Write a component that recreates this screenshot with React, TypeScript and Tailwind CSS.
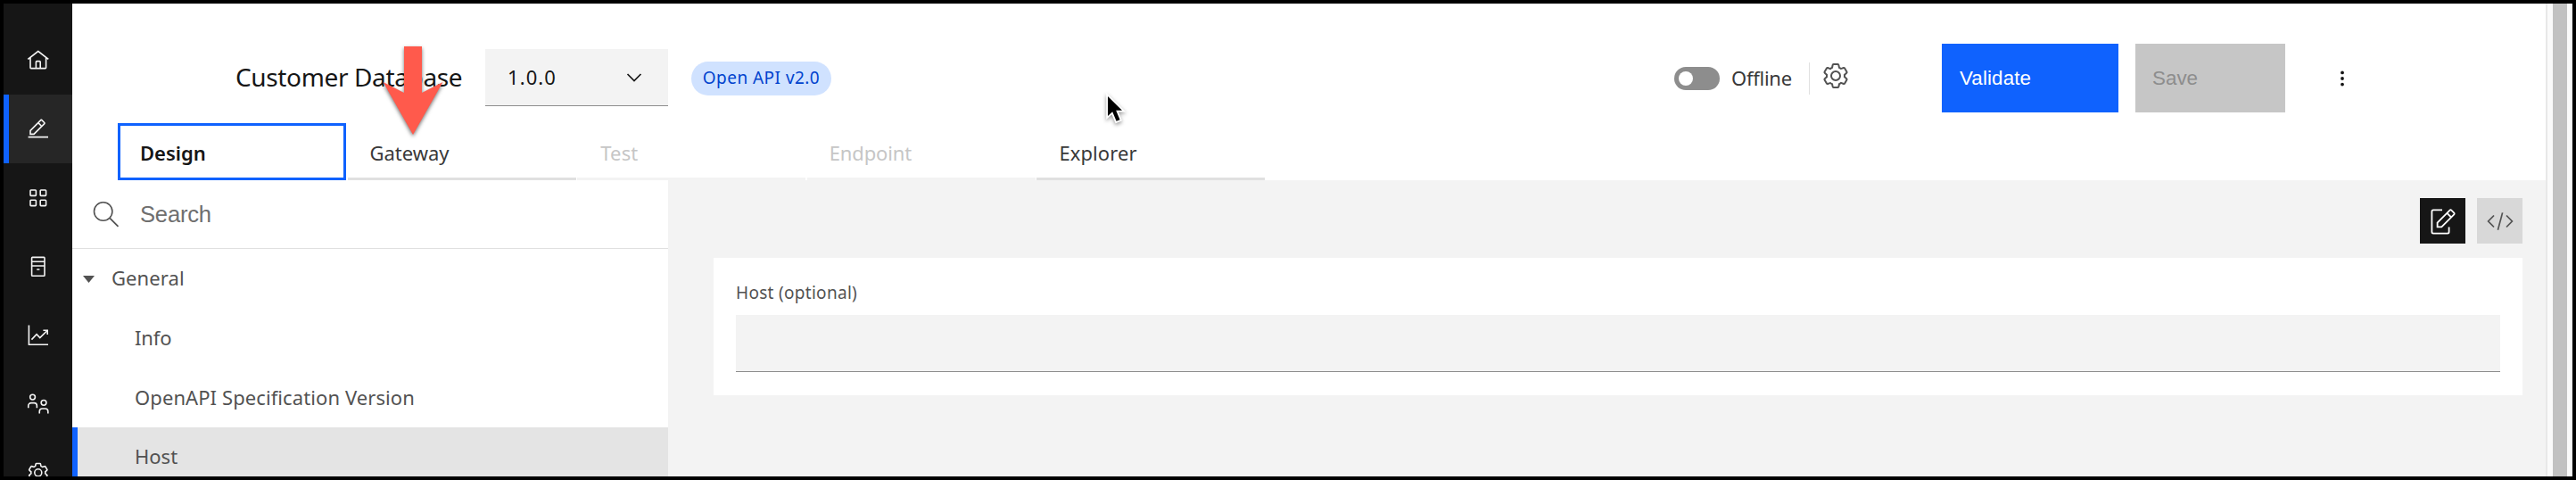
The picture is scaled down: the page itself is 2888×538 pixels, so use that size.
import React from "react";
import clsx from "clsx";

const SETTINGS_PATH =
  "M27,16.76c0-.25,0-.5,0-.76s0-.51,0-.77l1.92-1.68A2,2,0,0,0,29.3,11L26.94,7a2,2,0,0,0-1.73-1,2,2,0,0,0-.64.1l-2.43.82a11.35,11.35,0,0,0-1.31-.75l-.51-2.52a2,2,0,0,0-2-1.61H13.64a2,2,0,0,0-2,1.61l-.51,2.52a11.48,11.48,0,0,0-1.32.75L7.43,6.06A2,2,0,0,0,6.79,6,2,2,0,0,0,5.06,7L2.7,11a2,2,0,0,0,.41,2.51L5,15.24c0,.25,0,.5,0,.76s0,.51,0,.77L3.11,18.45A2,2,0,0,0,2.7,21L5.06,25a2,2,0,0,0,1.73,1,2,2,0,0,0,.64-.1l2.43-.82a11.35,11.35,0,0,0,1.31.75l.51,2.52a2,2,0,0,0,2,1.61h4.72a2,2,0,0,0,2-1.61l.51-2.52a11.48,11.48,0,0,0,1.32-.75l2.42.82a2,2,0,0,0,.64.1,2,2,0,0,0,1.73-1L29.3,21a2,2,0,0,0-.41-2.51ZM25.21,24l-3.43-1.16a8.86,8.86,0,0,1-2.71,1.57L18.36,28H13.64l-.71-3.55a9.36,9.36,0,0,1-2.7-1.57L6.79,24,4.43,20l2.72-2.4a8.9,8.9,0,0,1,0-3.13L4.43,12,6.79,8l3.43,1.16a8.86,8.86,0,0,1,2.71-1.57L13.64,4h4.72l.71,3.55a9.36,9.36,0,0,1,2.7,1.57L25.21,8,27.57,12l-2.72,2.4a8.9,8.9,0,0,1,0,3.13L27.57,20ZM16,22a6,6,0,1,1,6-6A5.94,5.94,0,0,1,16,22Zm0-10a3.91,3.91,0,0,0-4,4,3.91,3.91,0,0,0,4,4,3.91,3.91,0,0,0,4-4A3.91,3.91,0,0,0,16,12Z";

const HomeIcon = () => (
  <path
    fill="currentColor"
    d="M16.6123,2.2138a1.01,1.01,0,0,0-1.2427,0L1,13.4194l1.2427,1.5717L4,13.6208V26a2.0041,2.0041,0,0,0,2,2H26a2.0037,2.0037,0,0,0,2-2V13.63L29.7573,15,31,13.4282ZM18,26H14V18h4Zm2,0V18a2.0023,2.0023,0,0,0-2-2H14a2.002,2.002,0,0,0-2,2v8H6V12.0615l10-7.79,10,7.8005V26Z"
  />
);

const EditIcon = () => (
  <path
    fill="currentColor"
    d="M2 26H30V28H2z M25.4 9c.8-.8.8-2 0-2.8l-3.6-3.6c-.8-.8-2-.8-2.8 0l-15 15V24h6.4L25.4 9z M20.4 4L24 7.6l-3 3L17.4 7 20.4 4z M6 22v-3.6l10-10 3.6 3.6-10 10H6z"
  />
);

const AppsIcon = () => (
  <g fill="none" stroke="currentColor" strokeWidth="2">
    <rect x="5" y="5" width="8" height="8" rx="1" />
    <rect x="19" y="5" width="8" height="8" rx="1" />
    <rect x="5" y="19" width="8" height="8" rx="1" />
    <rect x="19" y="19" width="8" height="8" rx="1" />
  </g>
);

const CatalogIcon = () => (
  <g fill="none" stroke="currentColor" strokeWidth="2">
    <rect x="7" y="3" width="18" height="26" rx="1" />
    <path d="M7 9h18M7 15h18M14 20h4" />
  </g>
);

const ChartIcon = () => (
  <g fill="none" stroke="currentColor" strokeWidth="2">
    <path d="M3 2V29H30" />
    <path d="M6.8 22L13.8 14.5L18.5 19.5L29 9" />
    <path d="M23 9h6v6" />
  </g>
);

const MembersIcon = () => (
  <g fill="none" stroke="currentColor" strokeWidth="2">
    <circle cx="8.2" cy="6.4" r="3.6" />
    <path d="M2.2 21.5v-3a4 4 0 0 1 4-4h4a4 4 0 0 1 4 4v3" />
    <circle cx="23.8" cy="14.2" r="3.6" />
    <path d="M17.8 29.5v-3a4 4 0 0 1 4-4h4a4 4 0 0 1 4 4v3" />
  </g>
);

const SettingsIcon = () => <path fill="currentColor" d={SETTINGS_PATH} />;

const NAV = [
  { id: "home", Icon: HomeIcon },
  { id: "edit", Icon: EditIcon, active: true },
  { id: "apps", Icon: AppsIcon },
  { id: "catalog", Icon: CatalogIcon },
  { id: "analytics", Icon: ChartIcon },
  { id: "members", Icon: MembersIcon },
  { id: "settings", Icon: SettingsIcon },
];

function SideNav() {
  return (
    <nav className="flex w-[77px] shrink-0 flex-col overflow-hidden bg-[#161616] pt-[25px] text-[#f4f4f4]">
      {NAV.map(({ id, Icon, active }) => (
        <div
          key={id}
          className={clsx(
            "flex h-[77px] shrink-0 items-center justify-center",
            active && "border-l-6 border-[#0f62fe] bg-[#262626] pr-1.5",
          )}
        >
          <svg viewBox="0 0 32 32" className="size-[25.6px]">
            <Icon />
          </svg>
        </div>
      ))}
    </nav>
  );
}

const TABS = [
  { label: "Design", cls: "border-3 border-[#0f62fe] pl-[22px] pt-[3px] font-semibold text-[#161616]" },
  { label: "Gateway", cls: "border-b-3 border-[#e0e0e0] pl-[25px] pt-[6px] tracking-[-0.05px] text-[#393939]" },
  { label: "Test", cls: "border-b-3 border-[#f3f3f3] pl-[26px] pt-[6px] tracking-[0.17px] text-[#c6c6c6]" },
  { label: "Endpoint", cls: "border-b-3 border-[#f3f3f3] pl-[25px] pt-[6px] tracking-[-0.15px] text-[#c6c6c6]" },
  { label: "Explorer", cls: "border-b-3 border-[#e0e0e0] pl-[25px] pt-[6px] tracking-[0.1px] text-[#393939]" },
];

function Header() {
  return (
    <header className="h-[198px] shrink-0 bg-white pt-[45px]">
      <div className="flex h-[77px] items-center">
        <h1 className="mb-[3px] ml-[183px] w-[280px] shrink-0 whitespace-nowrap text-[28px] leading-[38px] tracking-[-0.36px] text-[#161616]">
          Customer Database
        </h1>
        <div className="mb-px flex h-16 w-[205px] shrink-0 items-center justify-between border-b border-[#8d8d8d] bg-[#f3f3f3] pl-[25px] pr-[28px] text-[22px] tracking-[1.1px] text-[#161616]">
          <span className="mb-px">1.0.0</span>
          <svg viewBox="0 0 20 12" className="h-3 w-5">
            <path d="M2.5 2L10 9.5L17.5 2" fill="none" stroke="currentColor" strokeWidth="1.7" />
          </svg>
        </div>
        <span className="ml-[26px] flex h-[38px] w-[157px] shrink-0 items-center justify-center whitespace-nowrap rounded-full bg-[#d0e2ff] text-[19px] tracking-[0.46px] text-[#0043ce]">
          Open API v2.0
        </span>
        <div className="ml-[945px] flex h-[26px] w-[51px] shrink-0 items-center rounded-full bg-[#8d8d8d] pl-[5px]">
          <div className="size-4 rounded-full bg-white" />
        </div>
        <span className="mb-px ml-[13px] w-[87px] shrink-0 whitespace-nowrap text-[22px] tracking-[-0.26px] text-[#393939]">
          Offline
        </span>
        <div className="h-9 w-px shrink-0 bg-[#e0e0e0]" />
        <svg viewBox="0 0 32 32" className="mb-[5px] ml-[13px] size-8 shrink-0 text-[#525252]">
          <SettingsIcon />
        </svg>
        <button className="ml-[103px] flex h-[77px] w-[198px] shrink-0 items-center bg-[#0f62fe] pl-5 font-['Liberation_Sans',sans-serif] text-[22.4px] tracking-[0.1px] text-white">
          Validate
        </button>
        <button className="ml-[19px] flex h-[77px] w-[168px] shrink-0 items-center bg-[#c6c6c6] pl-[19px] font-['Liberation_Sans',sans-serif] text-[22.4px] text-[#8d8d8d]">
          Save
        </button>
        <svg viewBox="0 0 32 32" className="ml-12 size-8 shrink-0 text-[#161616]">
          <circle cx="16" cy="9.4" r="1.9" fill="currentColor" />
          <circle cx="16" cy="16" r="1.9" fill="currentColor" />
          <circle cx="16" cy="22.6" r="1.9" fill="currentColor" />
        </svg>
      </div>
      <div className="ml-[51px] mt-3 flex gap-[1.6px] text-[22px]">
        {TABS.map(({ label, cls }) => (
          <div key={label} className={clsx("flex h-16 w-64 shrink-0 items-center", cls)}>
            {label}
          </div>
        ))}
      </div>
    </header>
  );
}

const TREE = [
  { label: "Info", cls: "border-transparent tracking-[-0.1px]" },
  { label: "OpenAPI Specification Version", cls: "border-transparent tracking-[0.09px]" },
  { label: "Host", cls: "border-[#0f62fe] bg-[#e4e4e4] pb-[2px]" },
];

function TreePanel() {
  return (
    <aside className="flex w-[668px] shrink-0 flex-col overflow-hidden bg-white text-[22px] text-[#525252]">
      <div className="flex h-[77px] shrink-0 items-center border-b border-[#e0e0e0] pl-[23px]">
        <svg viewBox="0 0 30 30" className="size-[30px] shrink-0">
          <circle cx="11.7" cy="12" r="10.2" fill="none" stroke="currentColor" strokeWidth="1.6" />
          <path d="M19 19.3L28.5 28.8" stroke="currentColor" strokeWidth="1.8" />
        </svg>
        <span className="ml-[23px] font-['Liberation_Sans',sans-serif] text-[25.6px] tracking-[-0.2px] text-[#6f6f6f]">
          Search
        </span>
      </div>
      <div className="flex h-[66.67px] shrink-0 items-center pb-[2px] pl-3">
        <svg viewBox="0 0 13 8" className="mt-[3px] h-2 w-[13px]">
          <path d="M0 0H13L6.5 8Z" fill="currentColor" />
        </svg>
        <span className="ml-[19px] tracking-[0.1px]">General</span>
      </div>
      {TREE.map(({ label, cls }) => (
        <div
          key={label}
          className={clsx("flex h-[66.67px] shrink-0 items-center border-l-6 pl-16", cls)}
        >
          {label}
        </div>
      ))}
    </aside>
  );
}

function Editor() {
  return (
    <main className="flex min-w-0 flex-1 flex-col pl-[51px] pr-[26px] pt-5">
      <div className="flex justify-end gap-[13px]">
        <button className="flex size-[51px] items-center justify-center bg-[#161616] text-white">
          <svg viewBox="0 0 32 32" className="size-8" fill="none" stroke="currentColor" strokeWidth="1.8">
            <path d="M15 3.4H5a1.6 1.6 0 0 0-1.6 1.6V28a1.6 1.6 0 0 0 1.6 1.6H21a1.6 1.6 0 0 0 1.6-1.6V22.6" />
            <path d="M9.6 22.3V17.6L23.6 3.6a1.2 1.2 0 0 1 1.7 0L28.3 6.6a1.2 1.2 0 0 1 0 1.7L14.3 22.3Z" />
            <path d="M20.4 6.8L25.1 11.5" />
          </svg>
        </button>
        <button className="flex size-[51px] items-center justify-center bg-[#d8d8d8] text-[#525252]">
          <svg viewBox="0 0 32 32" className="size-8" fill="none" stroke="currentColor" strokeWidth="1.7">
            <path d="M9 9.5L2.6 16L9 22.5" />
            <path d="M23 9.5L29.4 16L23 22.5" />
            <path d="M18.6 6.4L13.4 25.8" />
          </svg>
        </button>
      </div>
      <section className="mt-4 h-[154px] bg-white px-[25px] pt-[14px]">
        <label className="flex h-[50px] items-center text-[19px] tracking-[0.3px] text-[#525252]">
          Host (optional)
        </label>
        <div className="h-16 border-b border-[#8d8d8d] bg-[#f3f3f3]" />
      </section>
    </main>
  );
}

function ScrollGutter() {
  return (
    <div className="flex w-[30px] shrink-0 border-l-2 border-r-2 border-l-[#e8e8e8] border-r-[#ececec] bg-[#fafafa] pl-1.5 pr-1">
      <div className="flex-1 bg-[#c1c1c1]" />
    </div>
  );
}

export default function App() {
  return (
    <div className="relative flex h-[538px] w-[2888px] overflow-hidden border-4 border-black bg-[#f3f3f3] font-['Noto_Sans',sans-serif]">
      <SideNav />
      <div className="flex min-w-0 flex-1 flex-col">
        <Header />
        <div className="flex min-h-0 flex-1">
          <TreePanel />
          <Editor />
        </div>
      </div>
      <ScrollGutter />

      {/* Callout arrow pointing at the Gateway tab */}
      <svg
        viewBox="0 0 80 116"
        className="absolute left-[419px] top-[42px] h-[116px] w-20 drop-shadow-[0_2px_2px_rgba(0,0,0,0.55)]"
      >
        <path d="M30 6H50V58L73.5 46L40 105L6.5 46L30 58Z" fill="#ff5a4c" />
      </svg>

      {/* Mouse pointer */}
      <svg
        viewBox="0 0 28 38"
        className="absolute left-[1234px] top-[100px] h-[38px] w-7 drop-shadow-[0_2px_2px_rgba(0,0,0,0.4)]"
      >
        <path
          d="M4 4V26L9.2 21.2L13.6 31.8L17.6 30.2L13.2 19.8H20Z"
          fill="#000"
          stroke="#fff"
          strokeWidth="3.6"
          paintOrder="stroke"
        />
      </svg>
    </div>
  );
}
